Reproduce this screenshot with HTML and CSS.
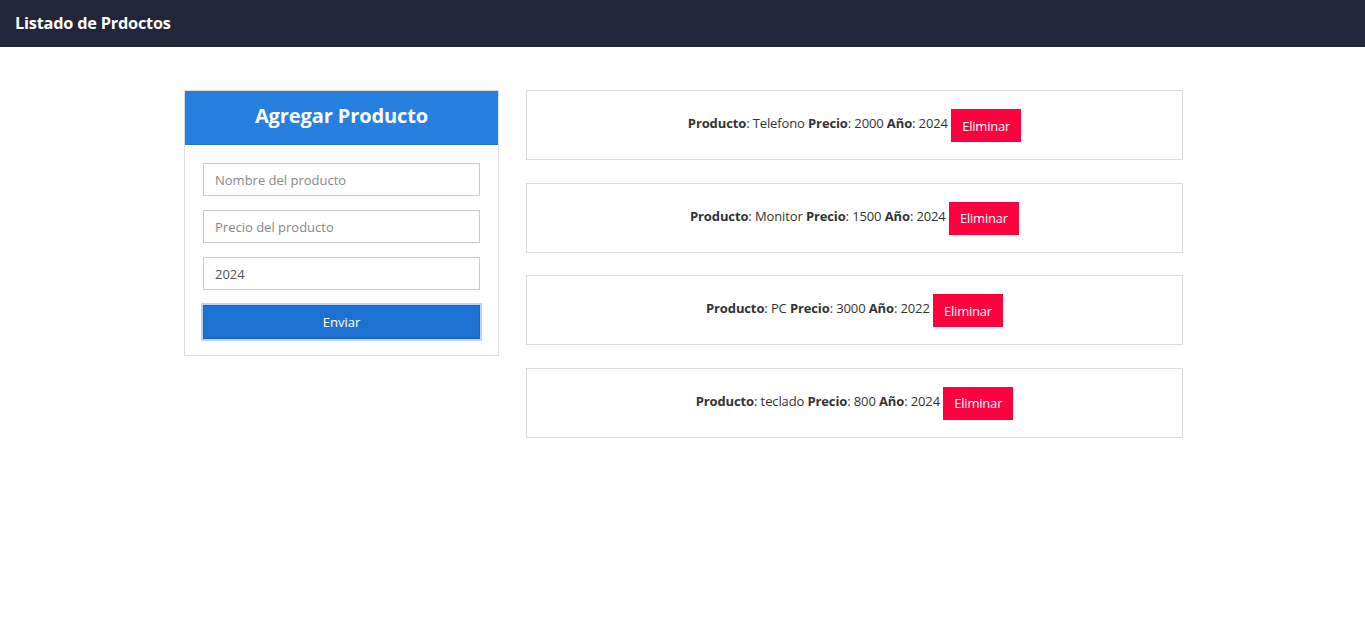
FILE: index.html
```html
<!DOCTYPE html>
<html lang="es">
<head>
<meta charset="utf-8">
<title>Listado de Prdoctos</title>
<link rel="stylesheet" href="styles.css">
</head>
<body>
<nav class="navbar"><span class="brand">Listado de Prdoctos</span></nav>
<main class="container">
  <section class="form-card">
    <div class="form-header"><h3>Agregar Producto</h3></div>
    <form class="form-body">
      <input class="field" type="text" placeholder="Nombre del producto">
      <input class="field" type="text" placeholder="Precio del producto">
      <input class="field" type="text" value="2024">
      <button type="button" class="btn-submit">Enviar</button>
    </form>
  </section>
  <section class="list">
    <div class="item"><p><strong>Producto</strong>: Telefono <strong>Precio</strong>: 2000 <strong>Año</strong>: 2024 <button class="btn-delete">Eliminar</button></p></div>
    <div class="item"><p><strong>Producto</strong>: Monitor <strong>Precio</strong>: 1500 <strong>Año</strong>: 2024 <button class="btn-delete">Eliminar</button></p></div>
    <div class="item"><p><strong>Producto</strong>: PC <strong>Precio</strong>: 3000 <strong>Año</strong>: 2022 <button class="btn-delete">Eliminar</button></p></div>
    <div class="item"><p><strong>Producto</strong>: teclado <strong>Precio</strong>: 800 <strong>Año</strong>: 2024 <button class="btn-delete">Eliminar</button></p></div>
  </section>
</main>
</body>
</html>
```
FILE: styles.css
```css
* { box-sizing: border-box; }
body {
  margin: 0;
  font-family: "Open Sans", "Noto Sans", "Liberation Sans", sans-serif;
  font-size: 13px;
  color: #333;
  background: #fff;
}
.navbar {
  height: 47px;
  background: #232639;
  display: flex;
  align-items: center;
  padding: 0 15px;
}
.brand {
  color: #fff;
  font-weight: 700;
  font-size: 16.3px;
  letter-spacing: -0.2px;
  margin-top: -2px;
}
.container {
  display: flex;
  justify-content: center;
  gap: 27px;
  padding: 43px 0 0 2px;
}
.form-card {
  width: 315px;
  border: 1px solid #ddd;
  align-self: flex-start;
}
.form-header {
  background: #2680e0;
  height: 54px;
  display: flex;
  align-items: center;
  justify-content: center;
  border-bottom: 1px solid #2572c8;
}
.form-header h3 {
  margin: -4px 0 0;
  color: #fff;
  font-size: 20px;
  font-weight: 700;
  letter-spacing: -0.1px;
}
.form-body {
  padding: 18px 18px 16px 18px;
  display: flex;
  flex-direction: column;
  gap: 14px;
}
.field {
  height: 33px;
  border: 1px solid #ccc;
  padding: 0 11px;
  font-family: inherit;
  font-size: 13px;
  color: #555;
}
.field::placeholder { color: #888; }
.btn-submit {
  height: 34px;
  margin-top: 1px;
  background: #1d72d1;
  color: #fff;
  border: 1px solid #1a66bd;
  box-shadow: 0 0 0 2px #b9d6f5;
  font-family: inherit;
  font-size: 13px;
}
.list {
  width: 657px;
  display: flex;
  flex-direction: column;
  gap: 22.5px;
}
.item {
  height: 70px;
  border: 1px solid #ddd;
  display: flex;
  align-items: center;
  justify-content: center;
}
.item p { margin: 0; letter-spacing: -0.12px; }
.item strong { font-weight: 700; }
.btn-delete {
  height: 33px;
  padding: 0 11px;
  background: #ff003f;
  color: #fff;
  border: 0;
  font-family: inherit;
  font-size: 13px;
  letter-spacing: -0.2px;
  vertical-align: middle;
  margin-top: 1px;
}
```
